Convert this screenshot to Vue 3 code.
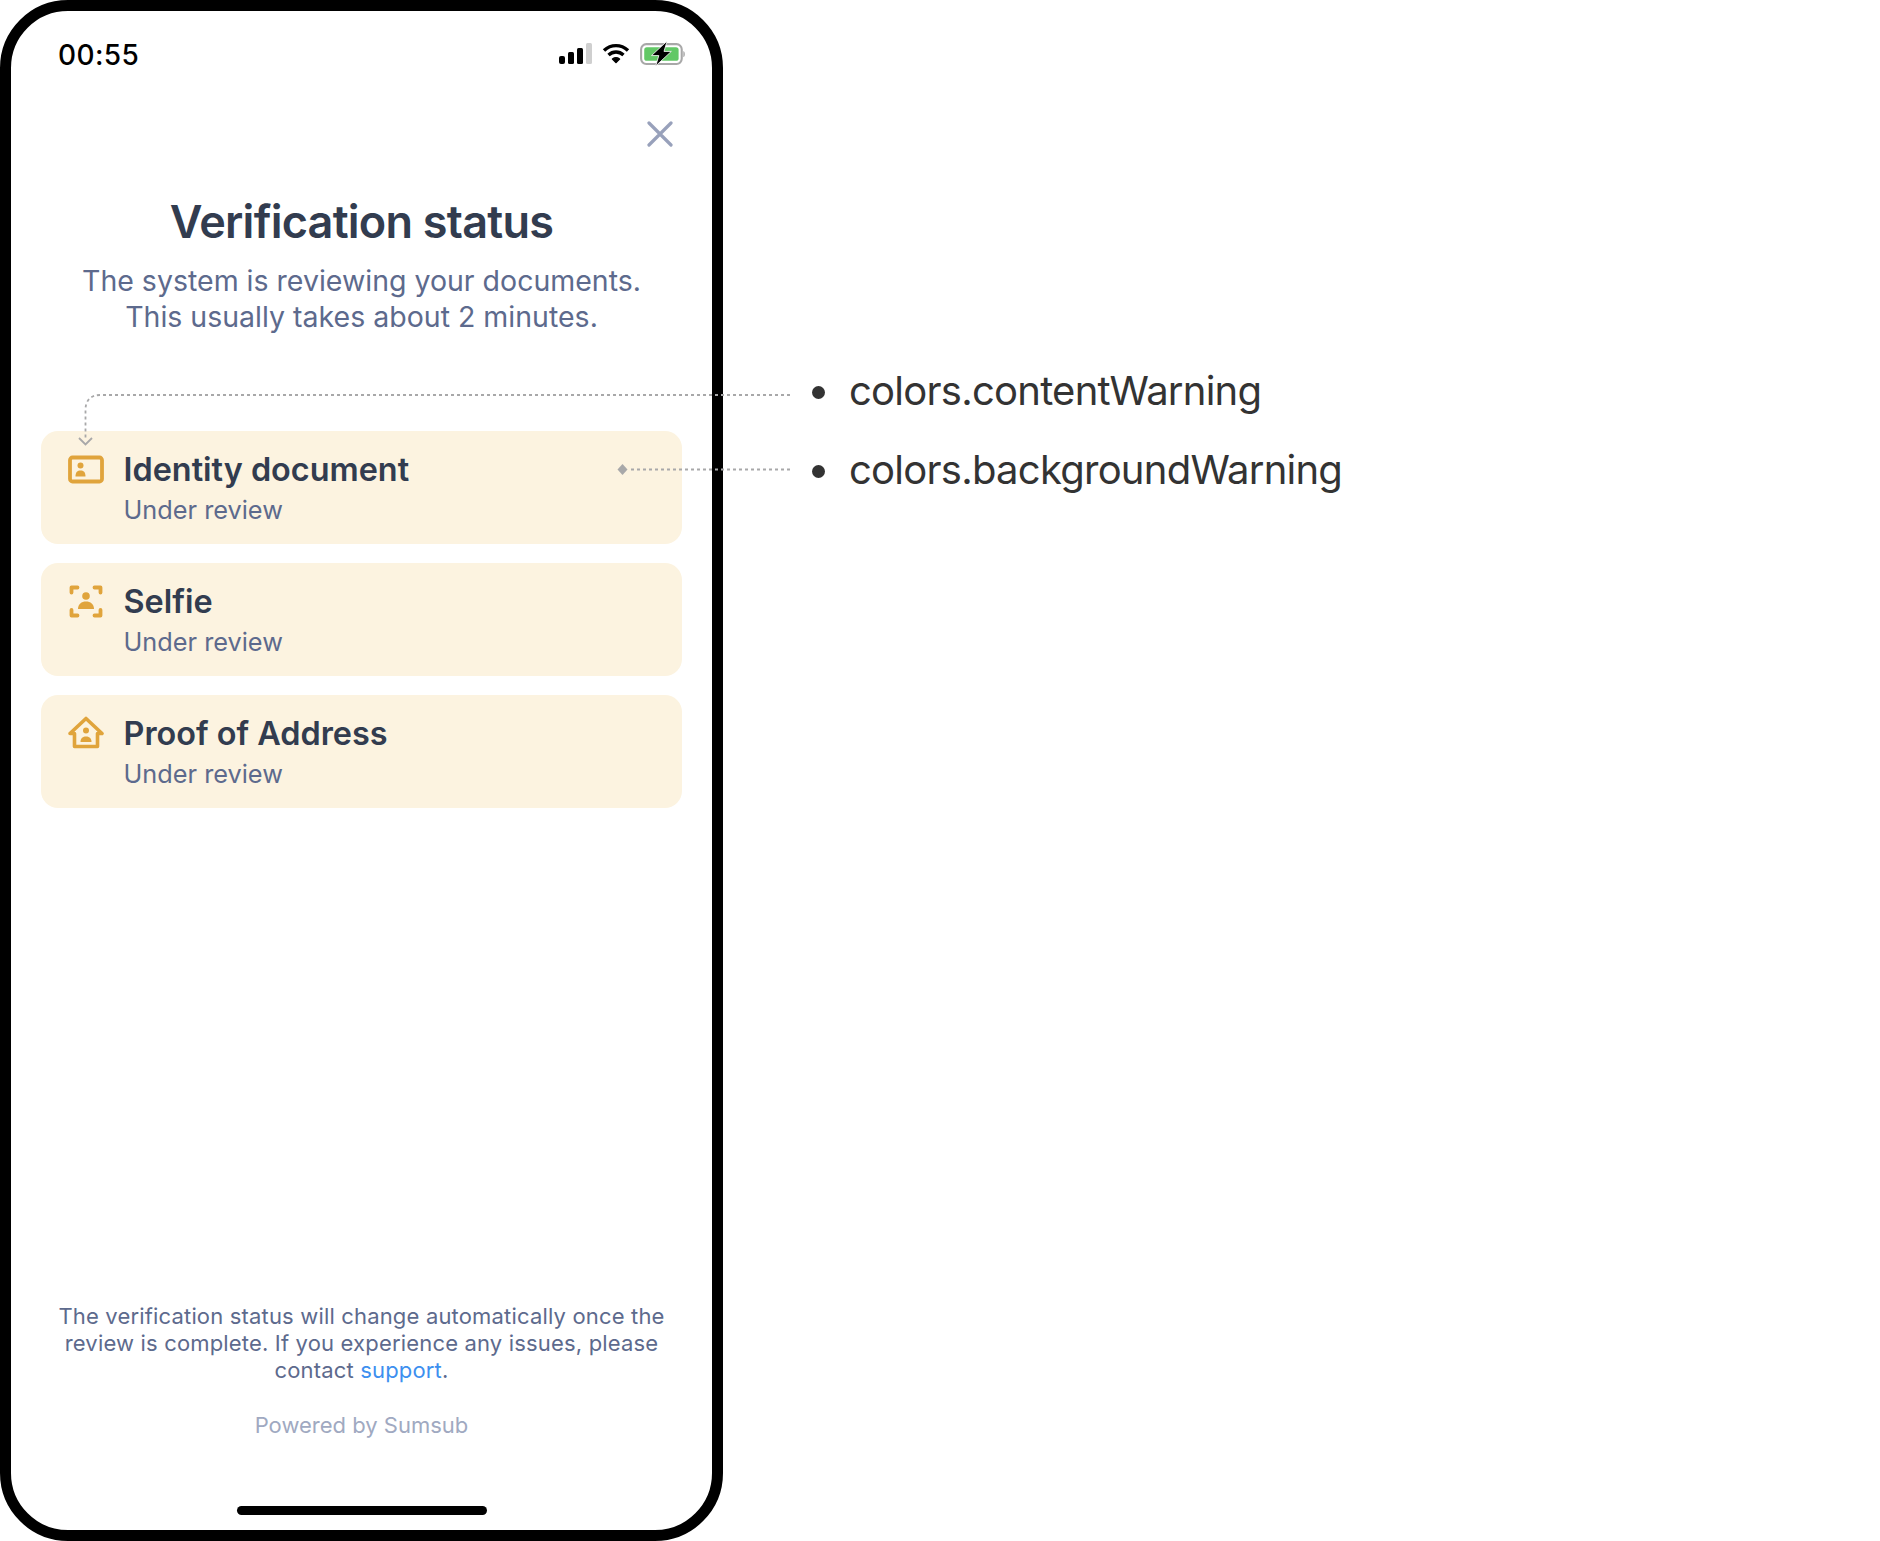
<template>
  <div class="stage">
    <div class="phone">
      <div class="status-bar">
        <span class="time">00:55</span>
        <div class="status-icons">
          <svg class="signal" width="33" height="21" viewBox="0 0 33 21">
            <rect x="0" y="13" width="6" height="8" rx="2" fill="#000" />
            <rect x="9" y="9" width="6" height="12" rx="1.5" fill="#000" />
            <rect x="18" y="5" width="6" height="16" rx="1.5" fill="#000" />
            <rect x="27" y="0" width="6" height="21" rx="1.5" fill="#cfcfcf" />
          </svg>
          <svg class="wifi" width="28" height="21" viewBox="0 0 28 21" fill="none" stroke="#000" stroke-width="3.4">
            <path d="M2 7.5C9 1 19 1 26 7.5" />
            <path d="M6.5 12C11 8 17 8 21.5 12" />
            <path d="M10.5 16C12.5 14.6 15.5 14.6 17.5 16L14 19.5Z" fill="#000" stroke-width="1.5" stroke-linejoin="round" />
          </svg>
          <svg class="battery" width="47" height="25" viewBox="0 0 45 24">
            <rect x="1" y="3" width="39" height="19" rx="5" fill="none" stroke="#a8a8a8" stroke-width="2" />
            <rect x="4" y="6" width="33" height="13" rx="2.5" fill="#62c866" />
            <path d="M41.5 9.5c2 .5 2 5.500 0 6z" fill="#a8a8a8" />
            <path d="M26 0L11 14h7l-3 10 15-14h-7z" fill="#000" stroke="#fff" stroke-width=".8" />
          </svg>
        </div>
      </div>

      <div class="toolbar">
        <svg class="close" width="26" height="26" viewBox="0 0 26 26" fill="none" stroke="#98a1bb" stroke-width="3.2" stroke-linecap="round">
          <path d="M2 2l22 22M24 2L2 24" />
        </svg>
      </div>

      <h1 class="title">Verification status</h1>
      <p class="subtitle">The system is reviewing your documents.<br />This usually takes about 2 minutes.</p>

      <div class="steps">
        <div v-for="step in steps" :key="step.name" class="step">
          <svg v-if="step.icon === 'id'" class="step-icon" width="36" height="36" viewBox="0 0 36 36">
            <rect x="2" y="6.500" width="32" height="24" rx="2.500" fill="none" stroke="#e0a43c" stroke-width="3.800" />
            <circle cx="12.500" cy="14.500" r="3" fill="#e0a43c" />
            <path d="M7.500 25.500c0-4.500 2-6 5-6s5 1.500 5 6z" fill="#e0a43c" />
          </svg>
          <svg v-else-if="step.icon === 'selfie'" class="step-icon" width="36" height="36" viewBox="0 0 36 36">
            <g fill="none" stroke="#e0a43c" stroke-width="3.800" stroke-linecap="round" stroke-linejoin="round">
              <path d="M9.500 4.500H3.500V9.500M26.500 4.500h6V9.500M9.500 32.500H3.500V27M26.500 32.500h6V27" />
            </g>
            <circle cx="18" cy="13" r="3.800" fill="#e0a43c" />
            <path d="M10 26c0-5 3.500-7.500 8-7.500s8 2.500 8 7.500z" fill="#e0a43c" />
          </svg>
          <svg v-else class="step-icon" width="36" height="36" viewBox="0 0 36 36">
            <path d="M2 18.500L18 3.500l16 15h-4.500v13h-23v-13z" fill="none" stroke="#e0a43c" stroke-width="3.600" stroke-linejoin="round" />
            <circle cx="18" cy="15.500" r="3" fill="#e0a43c" />
            <path d="M12.500 27c0-4 2.500-5.500 5.500-5.500s5.500 1.500 5.500 5.500z" fill="#e0a43c" />
          </svg>
          <div class="step-text">
            <div class="step-name">{{ step.name }}</div>
            <div class="step-status">Under review</div>
          </div>
        </div>
      </div>

      <div class="footer">
        <p class="note">
          The verification status will change automatically once the<br />
          review is complete. If you experience any issues, please<br />
          contact <a class="link">support</a>.
        </p>
        <p class="powered">Powered by Sumsub</p>
      </div>
      <div class="home-bar"></div>
    </div>

    <ul class="legend">
      <li v-for="item in legend" :key="item" class="legend-item">{{ item }}</li>
    </ul>

    <svg class="callouts" width="800" height="500" viewBox="0 0 800 500" fill="none">
      <g stroke="#a8a8a9" stroke-width="1.800" stroke-dasharray="3 3">
        <path d="M790 395H100C91 395 85.500 400.500 85.500 409.500V440" />
        <path d="M790 469.500H628" />
      </g>
      <path d="M79 438l6.500 6.500L92 438" stroke="#a8a8a9" stroke-width="1.800" />
      <path d="M622.500 464l5 5.500-5 5.500-5-5.500z" fill="#a8a8a9" />
    </svg>
  </div>
</template>

<script setup>
const steps = [
  { name: "Identity document", icon: "id" },
  { name: "Selfie", icon: "selfie" },
  { name: "Proof of Address", icon: "home" },
];

const legend = ["colors.contentWarning", "colors.backgroundWarning"];
</script>

<style>
body {
  margin: 0;
  background: #fff;
}
</style>

<style scoped>
.stage {
  position: relative;
  display: flex;
  width: 1880px;
  height: 1541px;
  font-family: Inter, "Noto Sans", sans-serif;
}

.phone {
  display: flex;
  flex-direction: column;
  box-sizing: border-box;
  width: 723px;
  height: 1541px;
  flex-shrink: 0;
  border: 11px solid #000;
  border-radius: 68px;
  background: #fff;
}

.status-bar {
  display: flex;
  justify-content: space-between;
  align-items: center;
  height: 44px;
  margin-top: 22px;
  padding: 0 25px 0 47px;
}

.time {
  font-size: 28px;
  font-weight: 500;
  color: #000;
  letter-spacing: 0.4px;
}

.status-icons {
  display: flex;
  align-items: center;
  gap: 10px;
  padding-bottom: 4px;
}

.toolbar {
  display: flex;
  justify-content: flex-end;
  margin-top: 44px;
  padding-right: 39px;
}

.title {
  margin: 47px 0 0;
  font-size: 45px;
  line-height: 56px;
  font-weight: 600;
  letter-spacing: -0.75px;
  text-align: center;
  color: #323c4f;
}

.subtitle {
  margin: 13px 0 0;
  font-size: 28.500px;
  line-height: 36px;
  font-weight: 400;
  text-align: center;
  color: #5d6a8d;
}

.steps {
  display: flex;
  flex-direction: column;
  gap: 19px;
  margin-top: 96px;
  padding: 0 30px;
}

.step {
  display: flex;
  gap: 19.500px;
  box-sizing: border-box;
  height: 113px;
  padding: 20px 27px;
  border-radius: 17px;
  background: #fcf3e0;
}

.step-icon {
  flex-shrink: 0;
}

.step-name {
  font-size: 32.400px;
  line-height: 38px;
  font-weight: 600;
  color: #323c4f;
}

.step-status {
  margin-top: 3px;
  font-size: 25.300px;
  line-height: 36px;
  color: #5d6a8d;
}

.footer {
  margin-top: auto;
  text-align: center;
}

.note {
  margin: 0;
  font-size: 22px;
  line-height: 27px;
  letter-spacing: 0.17px;
  color: #5d6a8d;
}

.link {
  color: #3d8fef;
}

.powered {
  margin: 28px 0 0;
  font-size: 22px;
  line-height: 27px;
  color: #a0a9c1;
}

.home-bar {
  width: 250px;
  height: 9px;
  margin: 67px auto 15px;
  border-radius: 5px;
  background: #000;
}

.legend {
  margin: 0;
  padding: 366px 0 0 126px;
  list-style: none;
}

.legend-item {
  position: relative;
  height: 79px;
  font-size: 40px;
  line-height: 50px;
  letter-spacing: -0.75px;
  color: #333;
}

.legend-item::before {
  content: "";
  position: absolute;
  left: -37px;
  top: 20px;
  width: 13px;
  height: 13px;
  border-radius: 50%;
  background: #333;
}

.callouts {
  position: absolute;
  left: 0;
  top: 0;
  pointer-events: none;
}
</style>
